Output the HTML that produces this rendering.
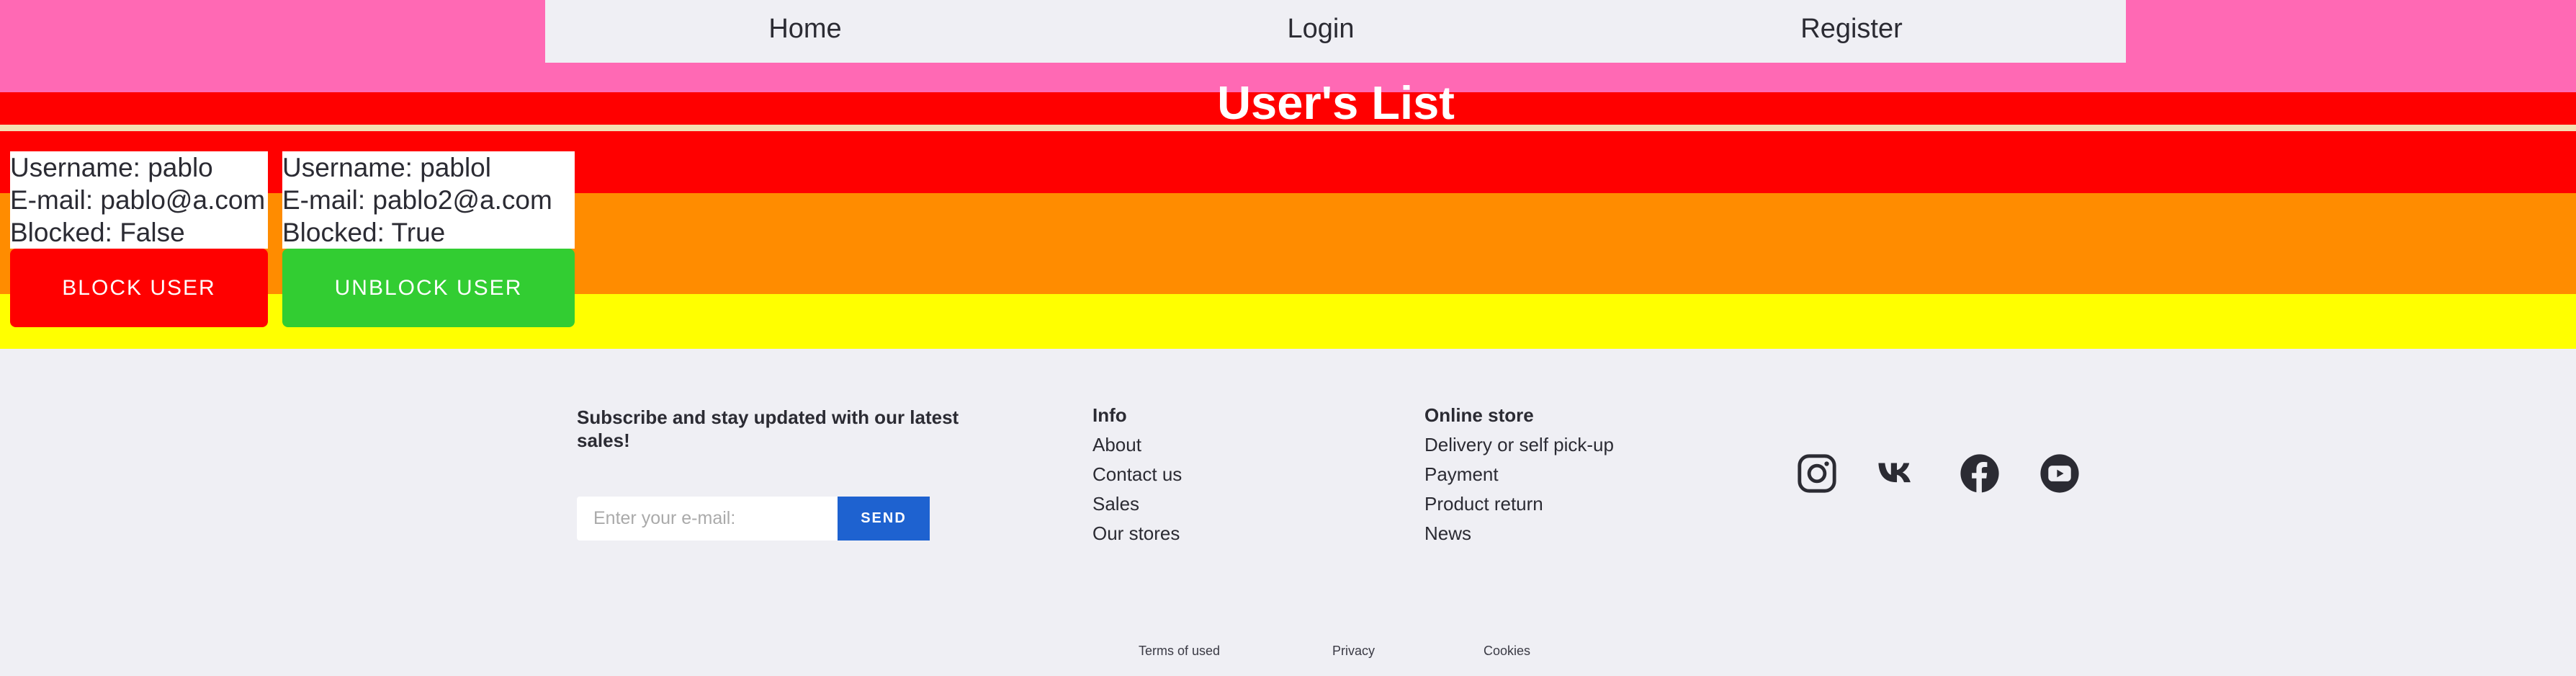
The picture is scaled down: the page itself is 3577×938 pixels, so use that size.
<!DOCTYPE html>
<html><head><meta charset="utf-8"><style>
*{margin:0;padding:0;box-sizing:border-box}
body{width:3577px;height:938px;position:relative;overflow:hidden;font-family:"Liberation Sans",Arial,sans-serif;color:#2b2b33;background:#efeff4}
.a{position:absolute}
.nav{left:757px;top:0;width:2195px;height:87px;background:#efeff4}
.nav span{position:absolute;top:0;line-height:80px;font-size:38px;transform:translateX(-50%);color:#2b2b33}
.card{background:#fff;font-size:37px;line-height:45px;white-space:nowrap;overflow:hidden}
.btn{border-radius:8px;color:#fff;font-size:30px;letter-spacing:2px;text-align:center;line-height:109px}
.f{font-size:26px;line-height:41px}
.b{font-weight:bold}
.bot{font-size:18px;line-height:24px;top:891px;color:#3a3a44}
</style></head><body>
<div class="a" style="left:0;top:0;width:3577px;height:128px;background:#ff69b4"></div>
<div class="a" style="left:0;top:128px;width:3577px;height:45px;background:#ff0000"></div>
<div class="a" style="left:0;top:173px;width:3577px;height:9px;background:#f5deb3"></div>
<div class="a" style="left:0;top:182px;width:3577px;height:86px;background:#ff0000"></div>
<div class="a" style="left:0;top:268px;width:3577px;height:140px;background:#ff8c00"></div>
<div class="a" style="left:0;top:408px;width:3577px;height:76px;background:#ffff00"></div>
<div class="a nav"><span style="left:361px">Home</span><span style="left:1077px">Login</span><span style="left:1814px">Register</span></div>
<div class="a b" style="left:0;width:3710px;text-align:center;top:103px;font-size:65px;line-height:80px;color:#fff">User's List</div>
<div class="a card" style="left:14px;top:210px;width:358px;height:135px">Username: pablo<br>E-mail: pablo@a.com<br>Blocked: False</div>
<div class="a btn" style="left:14px;top:345px;width:358px;height:109px;background:#ff0000">BLOCK USER</div>
<div class="a card" style="left:392px;top:210px;width:406px;height:135px">Username: pablol<br>E-mail: pablo2@a.com<br>Blocked: True</div>
<div class="a btn" style="left:392px;top:345px;width:406px;height:109px;background:#32cd32">UNBLOCK USER</div>

<div class="a b" style="left:801px;top:563px;font-size:26px;line-height:32px;width:560px">Subscribe and stay updated with our latest sales!</div>
<div class="a" style="left:801px;top:689px;width:362px;height:61px;background:#fff;border-radius:4px 0 0 4px;color:#aaa;font-size:25px;line-height:61px;padding-left:23px">Enter your e-mail:</div>
<div class="a b" style="left:1163px;top:689px;width:128px;height:61px;background:#1e62d0;color:#fff;font-size:20px;letter-spacing:2px;text-align:center;line-height:61px">SEND</div>

<div class="a f" style="left:1517px;top:556px"><span class="b">Info</span><br>About<br>Contact us<br>Sales<br>Our stores</div>
<div class="a f" style="left:1978px;top:556px"><span class="b">Online store</span><br>Delivery or self pick-up<br>Payment<br>Product return<br>News</div>

<svg class="a" style="left:2494px;top:628px" width="58" height="58" viewBox="0 0 24 24"><rect x="2" y="2" width="20" height="20" rx="5.5" fill="none" stroke="#2b2b33" stroke-width="2"/><circle cx="12" cy="12" r="4.5" fill="none" stroke="#2b2b33" stroke-width="2"/><circle cx="17.6" cy="6.4" r="1.3" fill="#2b2b33"/></svg>
<svg class="a" style="left:2606px;top:628px" width="58" height="58" viewBox="0 0 24 24"><path d="M1 6h3.7c.4 3.8 1.8 6.3 3.5 6.8V6h3.4v4c1.6-.2 3.2-2 3.8-4h3.3c-.5 2.6-2.5 4.6-3.9 5.4 1.4.7 3.7 2.5 4.6 5.6h-3.7c-.8-2.3-2.5-4-4.1-4.2V17h-.4C4.6 17 1.3 13 1 6z" fill="#2b2b33"/></svg>
<svg class="a" style="left:2720px;top:628px" width="58" height="58" viewBox="0 0 24 24"><circle cx="12" cy="12" r="11" fill="#2b2b33"/><path d="M13.2 23v-8.2h2.6l.4-3.1h-3V9.8c0-.9.3-1.5 1.5-1.5h1.6V5.5c-.3 0-1.2-.1-2.3-.1-2.3 0-3.9 1.4-3.9 4v2.3H7.5v3.1h2.6V23z" fill="#efeff4"/></svg>
<svg class="a" style="left:2831px;top:628px" width="58" height="58" viewBox="0 0 24 24"><circle cx="12" cy="12" r="11" fill="#2b2b33"/><rect x="5.5" y="7.5" width="13" height="9" rx="2.2" fill="#efeff4"/><path d="M10.5 9.8v4.4l3.8-2.2z" fill="#2b2b33"/></svg>

<div class="a bot" style="left:1581px">Terms of used</div>
<div class="a bot" style="left:1850px">Privacy</div>
<div class="a bot" style="left:2060px">Cookies</div>
</body></html>
